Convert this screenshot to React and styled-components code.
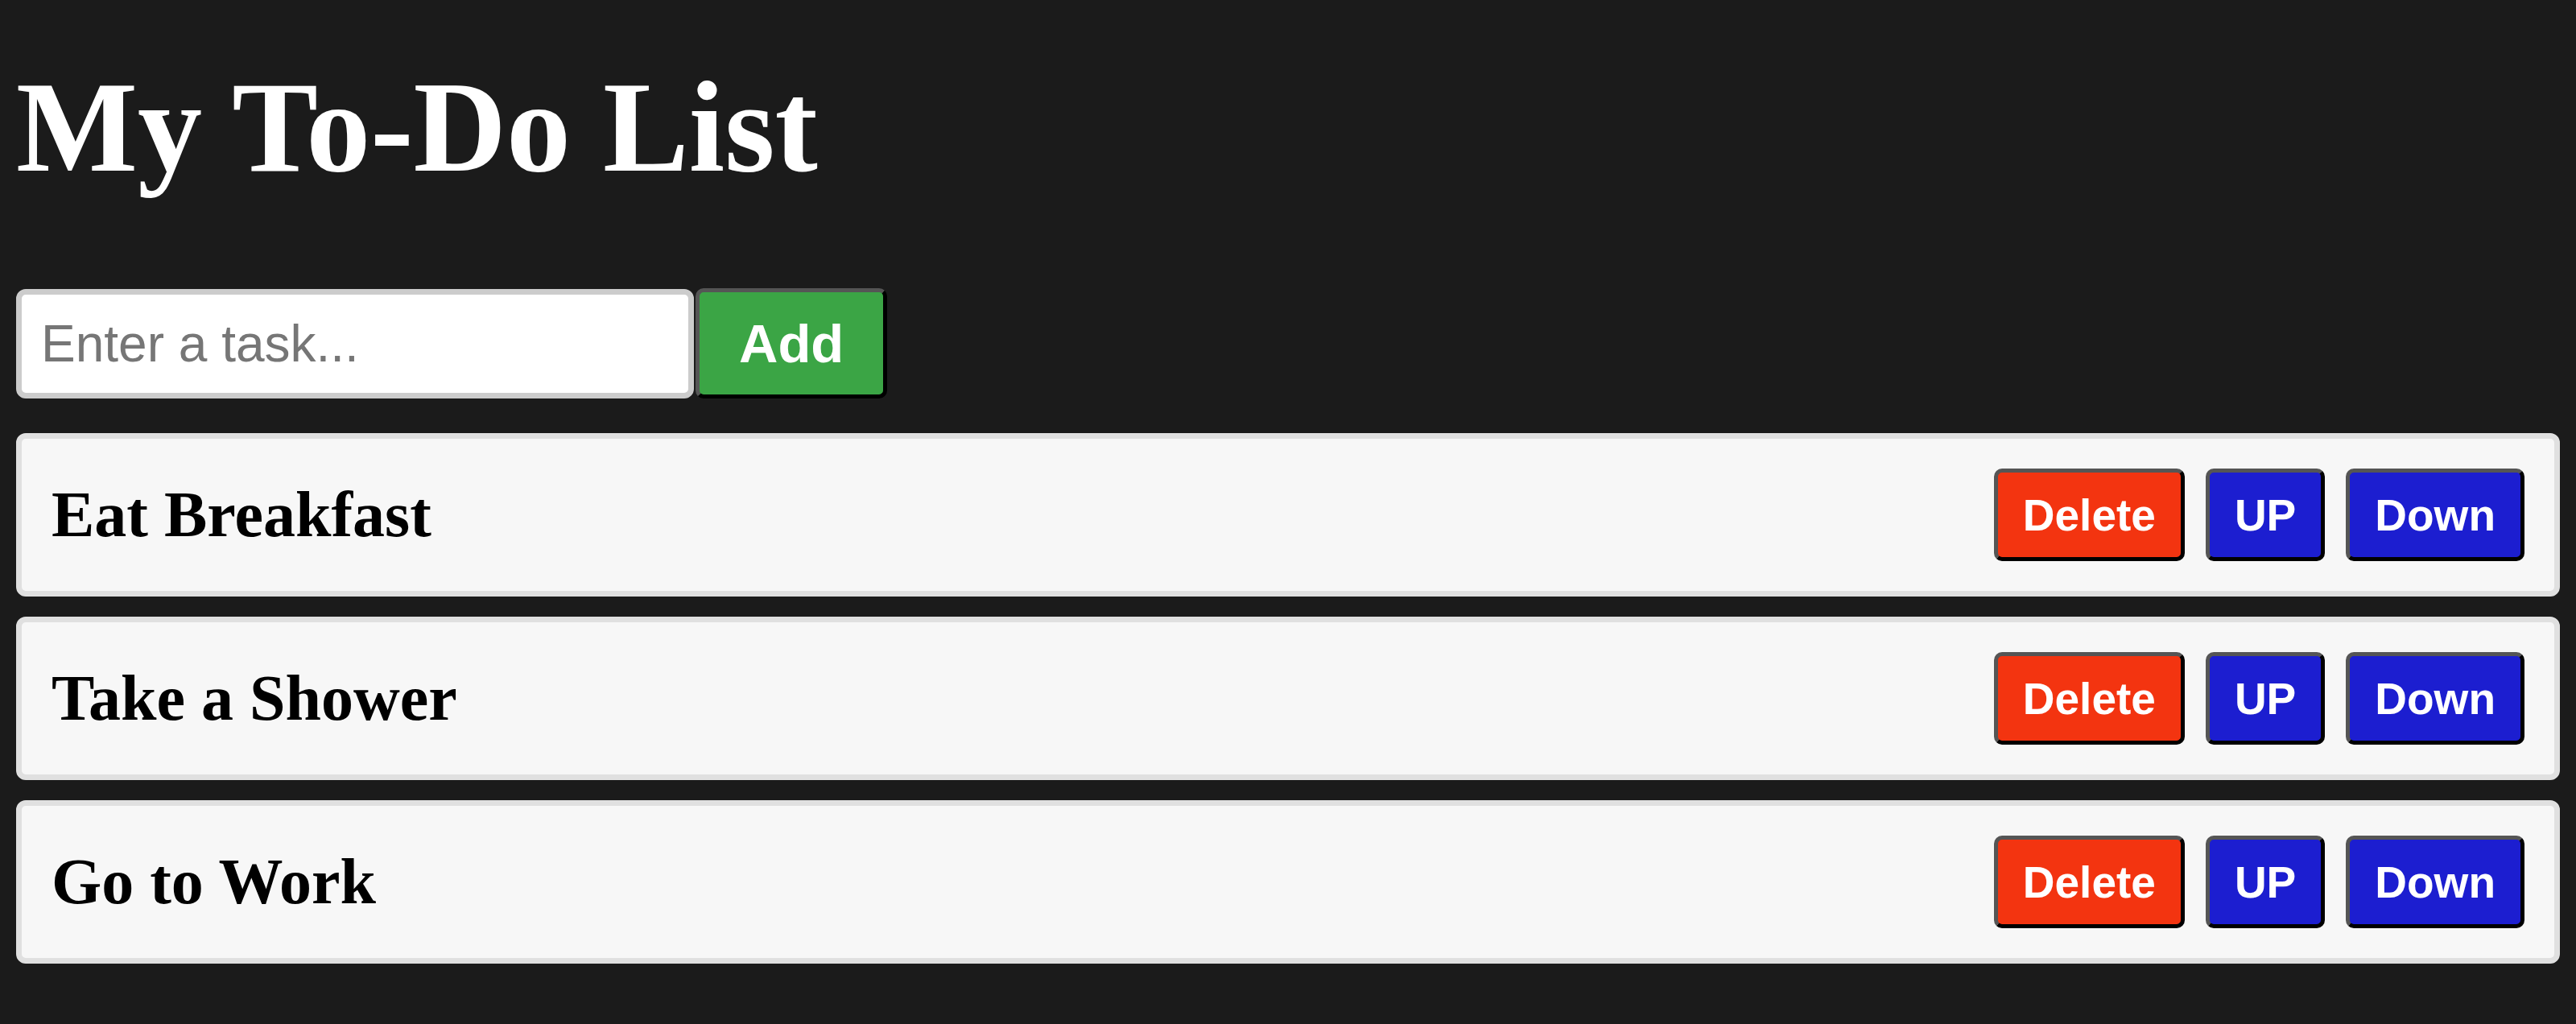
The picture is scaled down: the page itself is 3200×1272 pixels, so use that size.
import React, { useState } from "react"
import styled, { createGlobalStyle } from 'styled-components'

const GlobalStyle = createGlobalStyle`
    body {
        margin: 0;
        background-color: #1b1b1b;
    }
    * {
        box-sizing: border-box;
    }
`

const Page = styled.div`
    padding: 0 20px 60px;
`

const Title = styled.h1`
    margin: 70px 0 112px;
    font-family: 'Liberation Serif', 'Times New Roman', serif;
    font-size: 160px;
    line-height: 176px;
    font-weight: bold;
    color: white;
`

const InputRow = styled.div`
    display: flex;
    align-items: center;
    gap: 2px;
`

const TaskInput = styled.input`
    width: 842px;
    height: 136px;
    padding: 0 24px;
    border: 7px solid #cccccc;
    border-radius: 12px;
    background: white;
    font-family: 'Liberation Sans', Arial, sans-serif;
    font-size: 64px;
    color: #222;
    outline: none;

    &::placeholder {
        color: #767676;
    }
`

const ActionButton = styled.button`
    height: ${props => props.$big ? '137px' : '115px'};
    padding: ${props => props.$big ? '0 49px' : '0 31px'};
    border: 5px solid;
    border-color: #555555 #000000 #000000 #555555;
    border-radius: 10px;
    background-color: ${props => props.$color};
    color: white;
    font-family: 'Liberation Sans', Arial, sans-serif;
    font-size: ${props => props.$big ? '67px' : '55px'};
    font-weight: bold;
    cursor: pointer;
`

const List = styled.ol`
    list-style: none;
    margin: 43px 0 0;
    padding: 0;
    display: flex;
    flex-direction: column;
    gap: 25px;
`

const TaskRow = styled.li`
    display: flex;
    align-items: center;
    justify-content: space-between;
    height: 203px;
    padding: 0 37px;
    background-color: #f7f7f7;
    border: 7px solid #e0e0e0;
    border-radius: 12px;
`

const TaskText = styled.span`
    font-family: 'Liberation Serif', 'Times New Roman', serif;
    font-size: 80px;
    font-weight: bold;
    color: black;
`

const ButtonGroup = styled.div`
    display: flex;
    gap: 26px;
`

const RED = '#f33410'
const BLUE = '#1c1ed0'
const GREEN = '#3ba545'

function App() {
    const [tasks, setTasks] = useState(["Eat Breakfast", "Take a Shower", "Go to Work"])
    const [newTask, setNewTask] = useState("")

    function addTask() {
        if (newTask.trim() !== "") {
            setTasks(t => [...t, newTask])
            setNewTask("")
        }
    }

    function deleteTask(index) {
        setTasks(tasks.filter((_, i) => i !== index))
    }

    function moveTask(index, dir) {
        const target = index + dir
        if (target < 0 || target >= tasks.length) return
        const updated = [...tasks]
        ;[updated[index], updated[target]] = [updated[target], updated[index]]
        setTasks(updated)
    }

    return (
        <Page>
            <GlobalStyle />
            <Title>My To-Do List</Title>
            <InputRow>
                <TaskInput
                    type="text"
                    placeholder="Enter a task..."
                    value={newTask}
                    onChange={e => setNewTask(e.target.value)}
                />
                <ActionButton $big $color={GREEN} onClick={addTask}>Add</ActionButton>
            </InputRow>
            <List>
                {tasks.map((task, index) => (
                    <TaskRow key={index}>
                        <TaskText>{task}</TaskText>
                        <ButtonGroup>
                            <ActionButton $color={RED} onClick={() => deleteTask(index)}>Delete</ActionButton>
                            <ActionButton $color={BLUE} onClick={() => moveTask(index, -1)}>UP</ActionButton>
                            <ActionButton $color={BLUE} onClick={() => moveTask(index, 1)}>Down</ActionButton>
                        </ButtonGroup>
                    </TaskRow>
                ))}
            </List>
        </Page>
    )
}

export default App
